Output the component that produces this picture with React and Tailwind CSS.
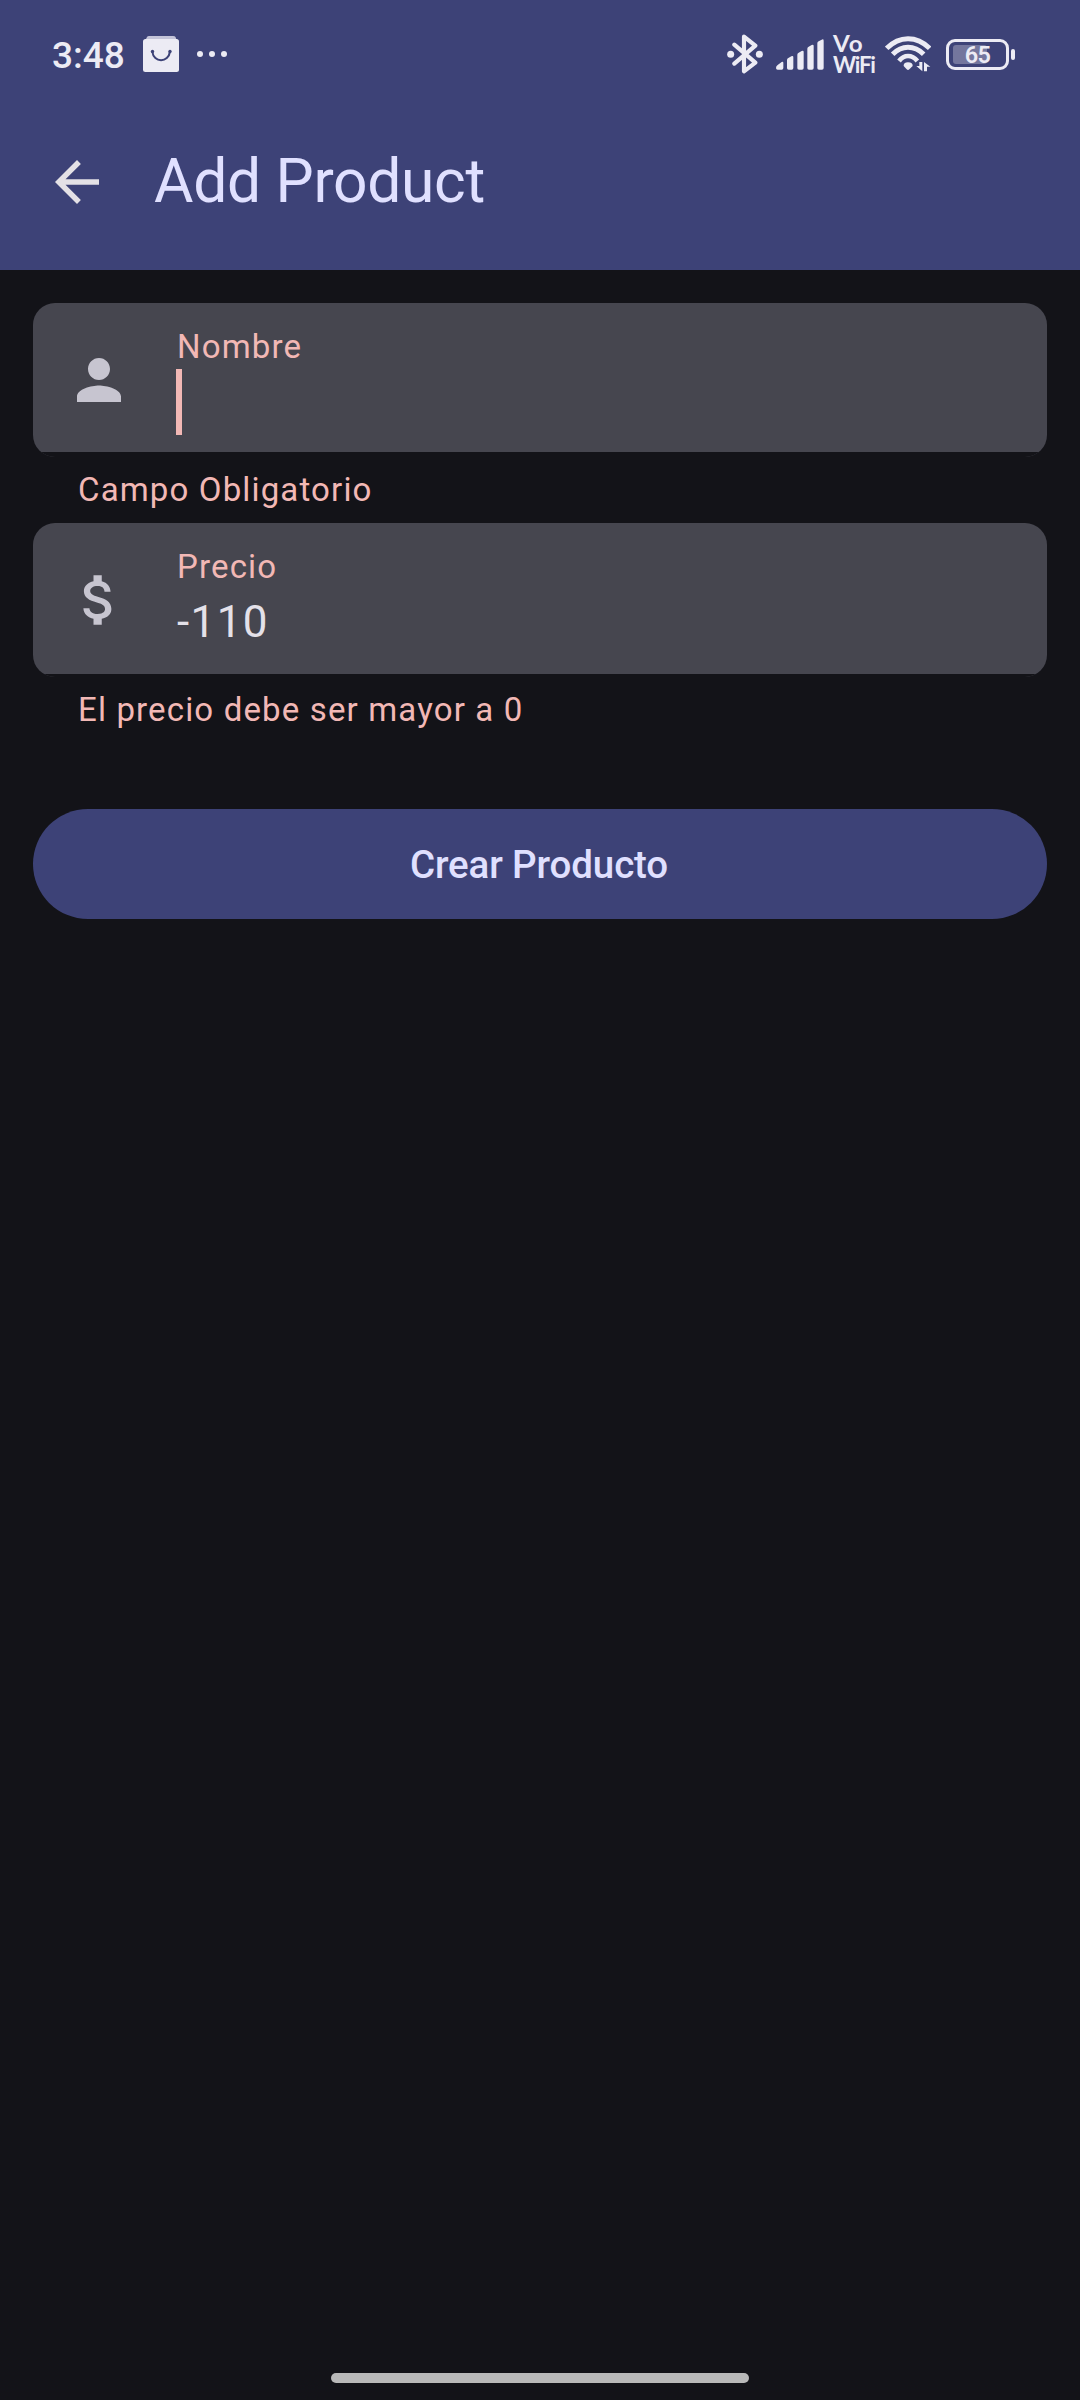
function BluetoothIcon() {
  return (
    <svg className="h-10 w-9" viewBox="51 41 108 120" fill="none">
      <path d="M73 73 L136 127 L102 153 V49 L136 76 L73 130" stroke="#ECEBF4" strokeWidth="12.500" strokeLinejoin="round" strokeLinecap="round" />
      <circle cx="62" cy="102" r="10.500" fill="#ECEBF4" />
      <circle cx="148" cy="102" r="10.500" fill="#ECEBF4" />
    </svg>
  );
}

function SignalIcon() {
  return (
    <svg className="h-[31px] w-12" viewBox="198 58 144 93" fill="#ECEBF4">
      <path d="M203 136 L215 127 Q220 124 220 130 V145 Q220 150 215 150 H203 Q198 150 198 145 Q198 139 203 136Z" />
      <path d="M235 115 L244 110 Q250 107 250 113 V145 Q250 150 245 150 H236 Q231 150 231 145 V121 Q231 117 235 115Z" />
      <path d="M266 99 L275 94 Q281 91 281 97 V145 Q281 150 276 150 H267 Q262 150 262 145 V105 Q262 101 266 99Z" />
      <path d="M296 81 L305 76 Q311 73 311 79 V145 Q311 150 306 150 H297 Q292 150 292 145 V87 Q292 83 296 81Z" />
      <path d="M326 65 L335 60 Q341 57 341 63 V145 Q341 150 336 150 H327 Q322 150 322 145 V71 Q322 67 326 65Z" />
    </svg>
  );
}

function WifiIcon() {
  return (
    <svg className="h-[36px] w-[46px]" viewBox="44 51 138 108" fill="none">
      <path d="M49 88 Q78 59 113 59 Q149 59 178 88" stroke="#ECEBF4" strokeWidth="15" />
      <path d="M67 106 Q88 85 113 85 Q139 85 160 106" stroke="#ECEBF4" strokeWidth="15" />
      <path d="M86 126 Q98 111 113 111 Q129 111 141 126" stroke="#ECEBF4" strokeWidth="14" />
      <path d="M100 141 Q99 131 113 130 Q128 131 127 141 L117 151 Q113 155 109 151Z" fill="#ECEBF4" />
      <path d="M156 129 V157 L138 141 H147 V129Z M161 157 V129 L180 143 H170 V157Z" fill="#ECEBF4" />
    </svg>
  );
}

function StatusBar() {
  return (
    <div className="flex h-[108px] items-center pl-[52px] text-[#ECEBF4]">
      <span className="w-[91px] pt-[3px] text-[37px] font-medium leading-[44px]">3:48</span>
      <svg className="h-9 w-9" viewBox="0 0 36 36">
        <path d="M2 5 L4 1 Q4.500 0 6 0 H30 Q32 0 32.500 1 L34 5Z" fill="#C4C4D9" />
        <rect y="3" width="36" height="33" rx="2.500" fill="#ECEBF4" />
        <path d="M9.300 15.500 C10.500 27 25.500 27 27 15.500" fill="none" stroke="#3D4277" strokeWidth="2" />
        <circle cx="9.500" cy="15.500" r="1.700" fill="#3D4277" />
        <circle cx="27" cy="15.500" r="1.700" fill="#3D4277" />
      </svg>
      <div className="ml-[18px] flex gap-1.5">
        <i className="size-1.5 rounded-full bg-[#ECEBF4]" />
        <i className="size-1.5 rounded-full bg-[#ECEBF4]" />
        <i className="size-1.5 rounded-full bg-[#ECEBF4]" />
      </div>
      <div className="ml-auto flex items-center pr-[65px]">
        <BluetoothIcon />
        <div className="ml-[13px]"><SignalIcon /></div>
        <div className="ml-[9px] w-[43px] font-['Lato',sans-serif] text-[22px] font-bold leading-[21px]">
          <div className="origin-left scale-x-110 tracking-[0.700px]">Vo</div>
          <div className="tracking-[-1.200px]">WiFi</div>
        </div>
        <div className="ml-[9px]"><WifiIcon /></div>
        <div className="relative ml-[15px] h-[31px] w-[63px] rounded-[9px] border-[3px] border-[#ECEBF4]">
          <div className="absolute left-1 top-[3px] h-[19px] w-[34px] rounded-[3px] bg-[#74769D]" />
          <div className="absolute inset-0 text-center text-[23.500px] font-semibold leading-[26px] tracking-[-0.800px]">65</div>
        </div>
        <div className="ml-0.5 h-[11px] w-1 rounded-sm bg-[#ECEBF4]" />
      </div>
    </div>
  );
}

function MaterialIcon({ path }) {
  return (
    <svg className="size-[66px]" viewBox="0 0 24 24" fill="currentColor">
      <path d={path} />
    </svg>
  );
}

const icons = {
  back: "M20 11H7.830l5.590-5.590L12 4l-8 8 8 8 1.410-1.410L7.830 13H20v-2z",
  person: "M12 12c2.210 0 4-1.790 4-4s-1.790-4-4-4-4 1.790-4 4 1.790 4 4 4zm0 2c-2.670 0-8 1.340-8 4v2h16v-2c0-2.660-5.330-4-8-4z",
  money: "M11.800 10.900c-2.270-.590-3-1.200-3-2.150 0-1.090 1.010-1.850 2.700-1.850 1.780 0 2.440.850 2.500 2.100h2.210c-.070-1.720-1.120-3.300-3.210-3.810V3h-3v2.160c-1.940.420-3.500 1.680-3.500 3.610 0 2.310 1.910 3.460 4.700 4.130 2.500.600 3 1.480 3 2.410 0 .690-.490 1.790-2.700 1.790-2.060 0-2.870-.920-2.980-2.100h-2.200c.120 2.190 1.760 3.420 3.680 3.830V21h3v-2.150c1.950-.370 3.500-1.500 3.500-3.550 0-2.840-2.430-3.810-4.700-4.400z",
};

function Field({ icon, label, error, indicator, children }) {
  return (
    <div className="h-[220px]">
      <div className="h-[154px] overflow-hidden rounded-[22px] bg-[#46464F]">
        <div className={"flex h-full border-[#131318] pl-[33px] " + indicator}>
          <div className="mt-11 h-[66px] w-[110px] text-[#C7C5D0]">
            <MaterialIcon path={icons[icon]} />
          </div>
          <div className="pt-[22px]">
            <div className="h-11 pl-px text-[33px] leading-[44px] tracking-[1.150px] text-[#F2B8B5]">{label}</div>
            <div className="flex h-[66px] text-[44px] leading-[66px] tracking-[1.375px] text-[#E4E1E9]">{children}</div>
          </div>
        </div>
      </div>
      <p className="pl-[45px] pt-[11px] text-[33px] leading-[44px] tracking-[1.150px] text-[#F2B8B5]">{error}</p>
    </div>
  );
}

export default function App() {
  return (
    <div className="flex h-[2400px] w-[1080px] flex-col bg-[#131318] font-['Roboto',sans-serif]">
      <header className="h-[270px] bg-[#3D4277]">
        <StatusBar />
        <div className="flex h-[147px] items-center pl-11">
          <div className="w-[110px] text-[#E4E1E6]">
            <MaterialIcon path={icons.back} />
          </div>
          <h1 className="text-[60.500px] leading-[77px] tracking-[-0.300px] text-[#E0E0FF]">Add Product</h1>
        </div>
      </header>
      <main className="px-[33px] pt-[33px]">
        <Field icon="person" label="Nombre" error="Campo Obligatorio" indicator="border-b-[5px]">
          <div className="h-[66px] w-1.5 bg-[#F2B8B5]" />
        </Field>
        <Field icon="money" label="Precio" error="El precio debe ser mayor a 0" indicator="border-b-[3px]">
          <span className="pl-px">-110</span>
        </Field>
        <button className="mt-[66px] h-[110px] w-full rounded-full bg-[#3D4277] pr-0.5 text-[38.500px] font-medium leading-[55px] tracking-[-0.120px] text-[#E0E0FF]">
          Crear Producto
        </button>
      </main>
      <div className="mx-auto mb-[17px] mt-auto h-[10px] w-[418px] rounded-full bg-[#B9B9B9]" />
    </div>
  );
}
